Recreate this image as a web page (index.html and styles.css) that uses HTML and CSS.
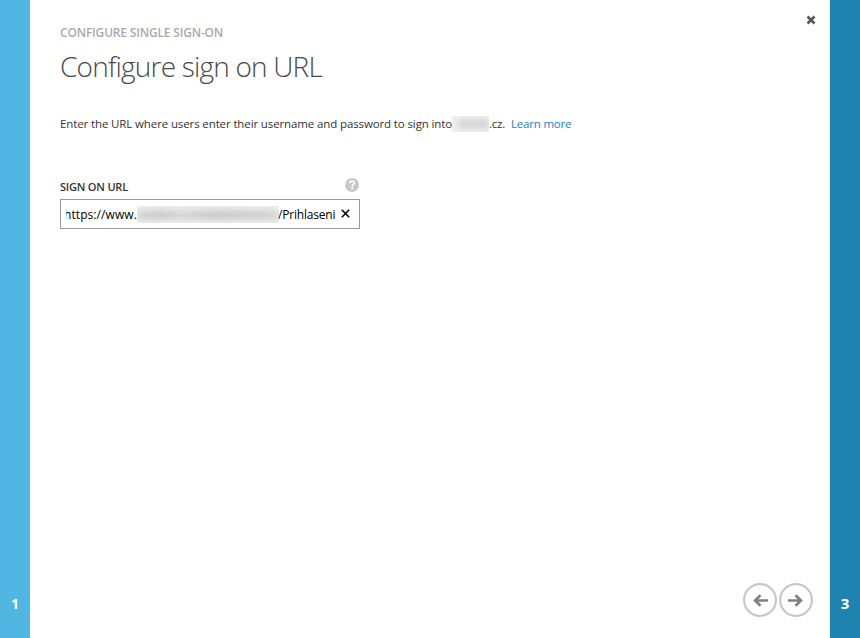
FILE: index.html
```html
<!DOCTYPE html>
<html lang="en">
<head>
<meta charset="utf-8">
<title>Configure sign on URL</title>
<link rel="stylesheet" href="styles.css">
</head>
<body>
<div class="wizard">
  <aside class="rail rail-prev">1</aside>
  <main class="panel">
    <button class="close" aria-label="Close"><svg width="10" height="10" viewBox="0 0 10 10"><path d="M1.5 1.5 8.5 8.5M8.5 1.5 1.5 8.5" stroke="#555" stroke-width="2.5"/></svg></button>
    <div class="eyebrow">CONFIGURE SINGLE SIGN-ON</div>
    <h1>Configure sign on URL</h1>
    <p class="intro"><span class="sentence">Enter the URL where users enter their username and password to sign into</span><span class="redacted small"><i></i></span><span class="domain">.cz.</span><a class="link">Learn more</a></p>
    <div class="label-row"><label>SIGN ON URL</label>
      <svg width="14" height="14" viewBox="0 0 14 14"><circle cx="7" cy="7" r="7" fill="#c8c8c8"/><path d="M4.8 5.2C4.8 2.4 9.3 2.5 9.2 5.1 9.1 6.7 7.2 6.6 7.2 8.4" fill="none" stroke="#fff" stroke-width="1.8"/><path d="M6.2 9.5h2v1.8h-2z" fill="#fff"/></svg>
    </div>
    <div class="field"><span class="clip"><span class="start">https://www.</span></span><span class="redacted large"><i></i></span><span class="end">/Prihlaseni</span><svg class="clear" width="9" height="9" viewBox="0 0 9 9"><path d="M.8.8 8.2 8.2M8.2.8.8 8.2" stroke="#000" stroke-width="1.6"/></svg></div>
    <nav class="steps">
      <button aria-label="Back"><svg width="34" height="34" viewBox="0 0 34 34"><circle cx="17" cy="17" r="15.9" fill="#fff" stroke="#c8c8c8" stroke-width="2.2"/><path d="M25 17.5H12M17.5 12.2 12 17.5 17.5 22.8" fill="none" stroke="#808080" stroke-width="2.6"/></svg></button>
      <button aria-label="Next"><svg width="34" height="34" viewBox="0 0 34 34"><circle cx="17" cy="17" r="15.9" fill="#fff" stroke="#c8c8c8" stroke-width="2.2"/><path d="M9 17.5H22M16.5 12.2 22 17.5 16.5 22.8" fill="none" stroke="#808080" stroke-width="2.6"/></svg></button>
    </nav>
  </main>
  <aside class="rail rail-next">3</aside>
</div>
</body>
</html>
```
FILE: styles.css
```css
* { box-sizing: border-box; }
body { margin: 0; font-family: "Open Sans", "Noto Sans", sans-serif; background: #fff; color: #333; }
button { padding: 0; border: 0; background: none; }
svg { display: block; }
.wizard { display: flex; height: 638px; overflow: hidden; }
.rail { width: 30px; display: flex; align-items: flex-end; justify-content: center; padding-bottom: 24px; color: #fff; font-size: 14px; line-height: 20px; font-weight: 700; }
.rail-prev { background: #52b6e2; }
.rail-next { background: #1f83b0; font-family: "Noto Sans", "Open Sans", sans-serif; font-size: 15px; padding-bottom: 25px; }
.panel { position: relative; flex: 1; padding: 24px 30px 0; }
.close { position: absolute; top: 15px; right: 14px; }
.eyebrow { font-size: 12px; line-height: 18px; font-weight: 600; color: #aaa; letter-spacing: -0.18px; white-space: nowrap; }
h1 { margin: 4px 0 0; font-size: 28px; line-height: 40px; font-weight: 300; color: #4a4a4a; letter-spacing: -0.8px; }
.intro { display: flex; align-items: center; height: 18px; margin: 29px 0 0; font-size: 11.5px; line-height: 18px; white-space: nowrap; }
.sentence { width: 392px; letter-spacing: -0.12px; }
.redacted { flex: none; overflow: hidden; background: #efefef; }
.redacted i { display: block; height: 8px; margin-top: 4px; background: #d0d0d0; filter: blur(3px); }
.small { width: 37px; height: 16px; }
.small i { margin-left: 6px; }
.domain { width: 22px; letter-spacing: -0.25px; }
.link { color: #1584c4; letter-spacing: -0.2px; }
.label-row { display: flex; justify-content: space-between; width: 299px; height: 20px; margin-top: 45px; }
label { font-size: 11px; line-height: 18px; font-weight: 600; letter-spacing: -0.2px; }
.field { display: flex; align-items: center; width: 300px; height: 30px; margin-top: 1px; padding-left: 5px; border: 1px solid #999; font-size: 12px; color: #000; white-space: nowrap; }
.clip { width: 71px; overflow: hidden; }
.start { margin-left: -2px; letter-spacing: 0.08px; }
.large { width: 142px; height: 17px; }
.large i { height: 10px; background: linear-gradient(90deg, #d4d4d4, #cacaca 15%, #d6d6d6 32%, #cacaca 55%, #cfcfcf 85%, #d8d8d8); }
.end { width: 61px; margin-left: -1px; letter-spacing: -0.2px; }
.clear { margin-left: 2px; transform: translateY(-1px); }
.steps { position: absolute; right: 17px; bottom: 21px; display: flex; gap: 2px; }
```
